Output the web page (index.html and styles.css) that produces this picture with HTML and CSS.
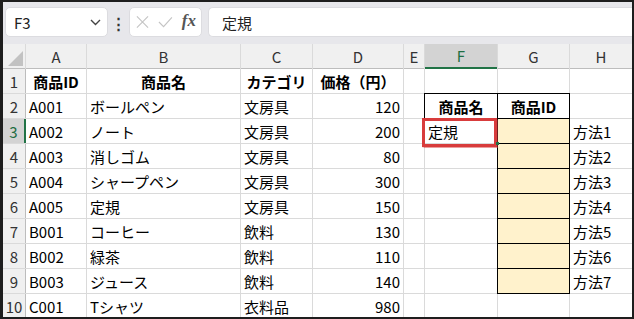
FILE: index.html
```html
<!DOCTYPE html>
<html lang="ja">
<head>
<meta charset="UTF-8">
<title>商品一覧</title>
<link rel="stylesheet" href="styles.css">
</head>
<body>
<div class="ventana">
    <div class="barra">
        <div class="nombre">
            <span>F3</span>
            <svg width="11" height="7" viewBox="0 0 11 7"><polyline points="1,1 5.5,5.5 10,1" fill="none" stroke="#444" stroke-width="1.4"/></svg>
        </div>
        <div class="puntos">⋮</div>
        <div class="fx">
            <svg width="14" height="14" viewBox="0 0 14 14"><path d="M1 1 L13 13 M13 1 L1 13" stroke="#c4c4c4" stroke-width="1.2" fill="none"/></svg>
            <svg width="16" height="12" viewBox="0 0 16 12"><polyline points="1,6 6,11 15,1" stroke="#c4c4c4" stroke-width="1.2" fill="none"/></svg>
            <span class="fx-txt">fx</span>
        </div>
        <div class="formula">定規</div>
    </div>

    <div class="hoja">
        <div class="hd esquina"><i></i></div>
        <div class="hd">A</div><div class="hd">B</div><div class="hd">C</div><div class="hd">D</div>
        <div class="hd">E</div><div class="hd sel-col">F</div><div class="hd">G</div><div class="hd">H</div>

        <div class="rh">1</div>
        <div class="c b">商品ID</div><div class="c b">商品名</div><div class="c b">カテゴリ</div><div class="c b">価格（円）</div>
        <div class="c"></div><div class="c"></div><div class="c"></div><div class="c"></div>

        <div class="rh">2</div>
        <div class="c">A001</div><div class="c">ボールペン</div><div class="c">文房具</div><div class="c r">120</div>
        <div class="c"></div><div class="c b caja">商品名</div><div class="c b caja">商品ID</div><div class="c"></div>

        <div class="rh sel-row">3</div>
        <div class="c">A002</div><div class="c">ノート</div><div class="c">文房具</div><div class="c r">200</div>
        <div class="c"></div><div class="c">定規</div><div class="c caja oro"></div><div class="c">方法1</div>

        <div class="rh">4</div>
        <div class="c">A003</div><div class="c">消しゴム</div><div class="c">文房具</div><div class="c r">80</div>
        <div class="c"></div><div class="c"></div><div class="c caja oro"></div><div class="c">方法2</div>

        <div class="rh">5</div>
        <div class="c">A004</div><div class="c">シャープペン</div><div class="c">文房具</div><div class="c r">300</div>
        <div class="c"></div><div class="c"></div><div class="c caja oro"></div><div class="c">方法3</div>

        <div class="rh">6</div>
        <div class="c">A005</div><div class="c">定規</div><div class="c">文房具</div><div class="c r">150</div>
        <div class="c"></div><div class="c"></div><div class="c caja oro"></div><div class="c">方法4</div>

        <div class="rh">7</div>
        <div class="c">B001</div><div class="c">コーヒー</div><div class="c">飲料</div><div class="c r">130</div>
        <div class="c"></div><div class="c"></div><div class="c caja oro"></div><div class="c">方法5</div>

        <div class="rh">8</div>
        <div class="c">B002</div><div class="c">緑茶</div><div class="c">飲料</div><div class="c r">110</div>
        <div class="c"></div><div class="c"></div><div class="c caja oro"></div><div class="c">方法6</div>

        <div class="rh">9</div>
        <div class="c">B003</div><div class="c">ジュース</div><div class="c">飲料</div><div class="c r">140</div>
        <div class="c"></div><div class="c"></div><div class="c caja oro"></div><div class="c">方法7</div>

        <div class="rh">10</div>
        <div class="c">C001</div><div class="c">Tシャツ</div><div class="c">衣料品</div><div class="c r">980</div>
        <div class="c"></div><div class="c"></div><div class="c"></div><div class="c"></div>
    </div>

    <div class="marca"></div>
    <div class="asa"></div>
</div>
</body>
</html>
```

FILE: styles.css
```css
body {
    margin: 0;
    background: #1e1e1e;
    font-family: "Noto Sans CJK JP", "Noto Sans", sans-serif;
}
.ventana {
    position: relative;
    margin: 2px 2px 0 3px;
    width: 629px;
    height: 315px;
    overflow: hidden;
    background: #fff;
}
.barra {
    display: flex;
    align-items: center;
    height: 42px;
    padding-left: 2px;
    padding-bottom: 2px;
    box-sizing: border-box;
    background: #e7e7eb;
}
.nombre, .fx, .formula {
    height: 30px;
    box-sizing: border-box;
    background: #fff;
    border: 1px solid #dcdce0;
    border-radius: 5px;
    display: flex;
    align-items: center;
}
.nombre {
    width: 103px;
    padding: 0 6px 0 8px;
    justify-content: space-between;
    font-size: 15px;
    color: #222;
}
.puntos {
    width: 21px;
    text-align: center;
    font-size: 15px;
    font-weight: bold;
    color: #333;
}
.fx {
    width: 73px;
    padding: 0 5px 0 6px;
    gap: 9px;
}
.fx-txt {
    font-family: "Liberation Serif", serif;
    font-style: italic;
    font-weight: bold;
    font-size: 17px;
    color: #555;
    margin-top: -2px;
}
.formula {
    flex: 1;
    margin-left: 6px;
    padding-left: 13px;
    border-right: none;
    border-radius: 5px 0 0 5px;
    font-size: 15px;
    color: #222;
}
.hoja {
    display: grid;
    grid-template-columns: 22px 60px 153px 71px 90px 20px 72px 71px 62px;
    grid-auto-rows: 24px;
    gap: 1px;
    background: #dadada;
    padding-bottom: 1px;
}
.hoja > div {
    display: flex;
    align-items: center;
    font-size: 15px;
    line-height: 1;
    white-space: nowrap;
    overflow: visible;
}
.hd, .rh {
    background: #f0f0f0;
    color: #333;
    justify-content: center;
}
.hd {
    box-shadow: 0 1px 0 #bdbdbd;
}
.rh {
    box-shadow: 1px 0 0 #bdbdbd;
}
.esquina {
    justify-content: flex-end !important;
    align-items: flex-end !important;
    padding: 0 2px 2px 0;
    box-sizing: border-box;
}
.esquina i {
    width: 15px;
    height: 15px;
    background: #c2c2c2;
    clip-path: polygon(100% 0, 100% 100%, 0 100%);
}
.sel-col {
    background: #d3d3d3;
    color: #1e6e43;
    box-shadow: 0 1px 0 #217346;
    border-bottom: 1px solid #217346;
}
.sel-row {
    background: #d3d3d3;
    color: #1e6e43;
    box-shadow: 1px 0 0 #217346;
    border-right: 1px solid #217346;
}
.c {
    background: #fff;
    color: #000;
    padding: 1px 3px 0;
}
.b {
    font-weight: bold;
    justify-content: center;
}
.r {
    justify-content: flex-end;
}
.caja {
    outline: 1px solid #000;
}
.oro {
    background: #fff2cc;
}
.marca {
    position: absolute;
    left: 419px;
    top: 116px;
    width: 75px;
    height: 29px;
    box-sizing: border-box;
    border: 3px solid #d83c3c;
    box-shadow: 0 0 1px 0.5px rgba(216, 60, 60, 0.5);
}
.asa {
    position: absolute;
    left: 493px;
    top: 140px;
    width: 3px;
    height: 3px;
    background: #217346;
}
```
